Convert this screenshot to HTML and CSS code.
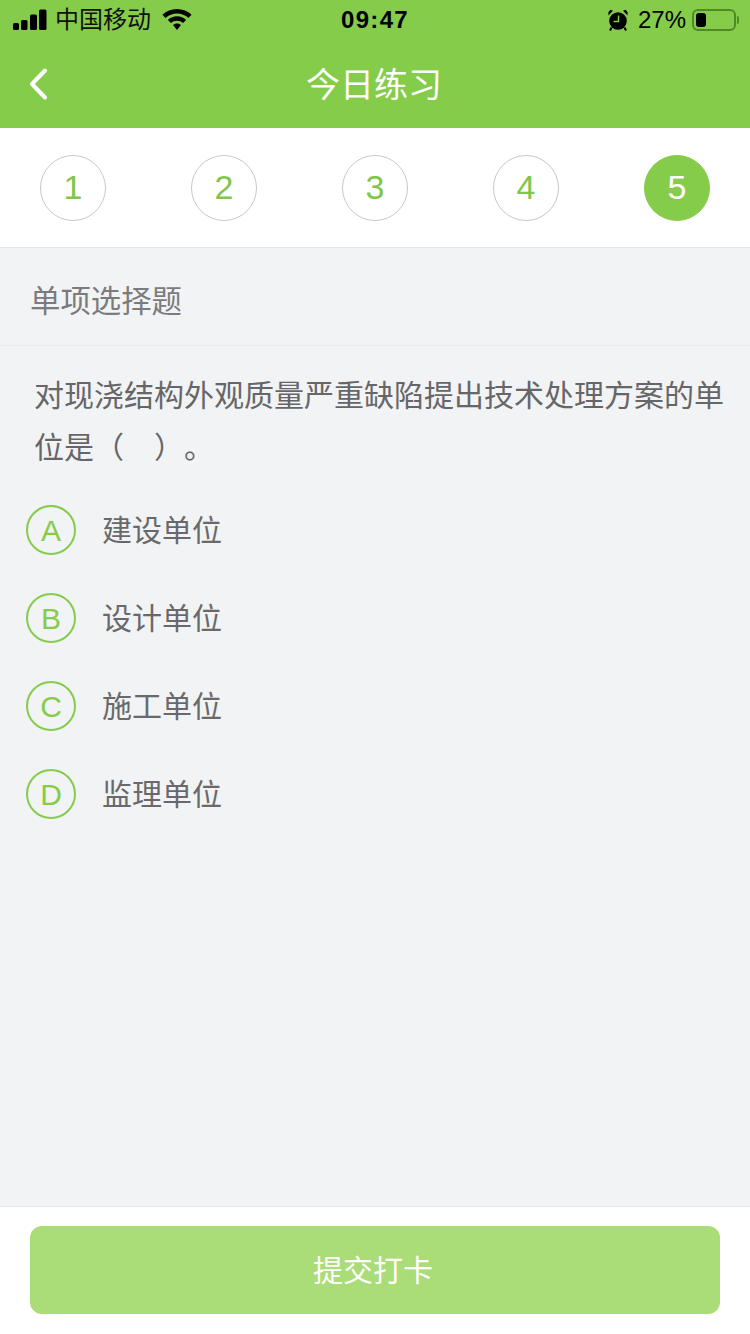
FILE: index.html
```html
<!DOCTYPE html>
<html lang="zh-CN">
<head>
<meta charset="utf-8">
<title>今日练习</title>
<link rel="stylesheet" href="styles.css">
</head>
<body>
<div class="page">
  <header class="top">
    <div class="status">
      <div class="status-left">
        <svg class="signal" width="34" height="22" viewBox="0 0 34 22"><rect x="0" y="14" width="6" height="7" rx="1.500"/><rect x="8" y="11" width="6.500" height="10" rx="1.500"/><rect x="17" y="5.500" width="7" height="15.500" rx="1.500"/><rect x="26" y="0.500" width="7.500" height="20.500" rx="1.500"/></svg>
        <span class="carrier">中国移动</span>
        <svg class="wifi" width="30" height="22" viewBox="0 0 30 22"><path d="M15 0C9.300 0 4.300 2.200 0.400 5.800L3.600 9C6.700 6.300 10.600 4.600 15 4.600S23.300 6.300 26.400 9L29.600 5.800C25.700 2.200 20.700 0 15 0Z"/><path d="M15 7.300C11.500 7.300 8.300 8.600 5.900 10.900L9 14C10.600 12.600 12.700 11.800 15 11.800S19.400 12.600 21 14L24.100 10.900C21.700 8.600 18.500 7.300 15 7.300Z"/><path d="M15 14.400C13.500 14.400 12.100 15 11 16L15 21L19 16C17.900 15 16.500 14.400 15 14.400Z"/></svg>
      </div>
      <span class="clock">09:47</span>
      <div class="status-right">
        <svg class="alarm" width="20" height="22" viewBox="0 0 20 22"><circle cx="10" cy="12" r="8.800"/><path d="M0.500 6.500 5 1.800 2.300 0.800.4 3.200ZM19.500 6.500 15 1.800 17.700 0.800 19.600 3.200Z"/><path d="M3.500 18.500 2 21.500M16.500 18.500 18 21.500" stroke="#000" stroke-width="2"/><path d="M10.500 6.500V12.500H5.500" fill="none" stroke="#86cc4b" stroke-width="1.500"/></svg>
        <span class="percent">27%</span>
        <span class="battery"><span class="battery-level"></span></span>
        <span class="battery-cap"></span>
      </div>
    </div>
    <nav class="navbar">
      <svg class="back" width="20" height="34" viewBox="0 0 20 34"><path d="M16 3.500 3 17 16 30.500" fill="none" stroke="#fff" stroke-width="4" stroke-linecap="round" stroke-linejoin="round"/></svg>
      <h1 class="title">今日练习</h1>
    </nav>
  </header>

  <div class="steps">
    <span class="step">1</span>
    <span class="step">2</span>
    <span class="step">3</span>
    <span class="step">4</span>
    <span class="step step-active">5</span>
  </div>

  <main class="content">
    <div class="type">单项选择题</div>
    <p class="question">对现浇结构外观质量严重缺陷提出技术处理方案的单位是（　）。</p>
    <ul class="options">
      <li class="option"><span class="letter">A</span><span class="option-text">建设单位</span></li>
      <li class="option"><span class="letter">B</span><span class="option-text">设计单位</span></li>
      <li class="option"><span class="letter">C</span><span class="option-text">施工单位</span></li>
      <li class="option"><span class="letter">D</span><span class="option-text">监理单位</span></li>
    </ul>
  </main>

  <footer class="footer">
    <button class="submit" type="button">提交打卡</button>
  </footer>
</div>
</body>
</html>
```
FILE: styles.css
```css
* { box-sizing: border-box; }
html, body { margin: 0; padding: 0; }
body {
  width: 750px;
  height: 1334px;
  overflow: hidden;
  background: #f2f3f5;
  font-family: "Liberation Sans", "Noto Sans CJK SC", sans-serif;
  text-spacing-trim: space-all;
}
.page { display: flex; flex-direction: column; height: 1334px; }

.top { height: 128px; background: #86cc4b; flex: none; }
.status {
  height: 40px;
  display: flex;
  align-items: center;
  justify-content: space-between;
  padding: 0 11px 0 13px;
  position: relative;
  color: #000;
}
.status-left, .status-right { display: flex; align-items: center; }
.signal { margin-right: 8px; }
.carrier { font-size: 24px; line-height: 40px; color: #111; }
.wifi { margin-left: 11px; }
.clock {
  position: absolute;
  left: 0;
  right: 0;
  text-align: center;
  font-size: 24px;
  font-weight: 700;
  line-height: 40px;
  letter-spacing: 1.3px;
  pointer-events: none;
}
.status-right { position: relative; }
.alarm { margin-right: 10px; }
.percent { font-size: 24px; line-height: 40px; margin-right: 6px; }
.battery {
  display: block;
  width: 44px;
  height: 22px;
  border: 2px solid #4f8a24;
  border-radius: 6px;
  padding: 2px;
}
.battery-level { display: block; width: 10px; height: 14px; background: #000; border-radius: 3px; }
.battery-cap { display: block; width: 2px; height: 8px; margin-left: 1px; background: #4f8a24; border-radius: 0 2px 2px 0; }

.navbar {
  height: 88px;
  position: relative;
  display: flex;
  align-items: center;
  justify-content: center;
}
.back { position: absolute; left: 29px; top: 27px; }
.title { margin: 0 2px 0 0; font-size: 34px; font-weight: 400; color: #fff; line-height: 88px; position: relative; top: 1px; }

.steps {
  height: 120px;
  flex: none;
  background: #fff;
  border-bottom: 1px solid #e6e7e9;
  display: flex;
  justify-content: space-between;
  align-items: center;
  padding: 0 40px;
}
.step {
  width: 66px;
  height: 66px;
  border: 1px solid #c8c8c8;
  border-radius: 50%;
  display: flex;
  align-items: center;
  justify-content: center;
  font-size: 34px;
  color: #80c64a;
}
.step-active { background: #86cc4b; border-color: #86cc4b; color: #fff; }

.content { flex: 1; min-height: 0; }
.type {
  height: 98px;
  border-bottom: 1px solid #e9eaec;
  padding-left: 30px;
  font-size: 30.400px;
  line-height: 107px;
  color: #7b7b7d;
}
.question {
  margin: 0;
  padding: 24px 20px 0 34px;
  font-size: 30px;
  line-height: 52px;
  color: #666668;
}
.options { list-style: none; margin: 0; padding: 10px 0 0 26px; }
.option { height: 88px; display: flex; align-items: center; }
.letter {
  width: 50px;
  height: 50px;
  flex: none;
  margin-top: 3px;
  border: 2px solid #86cc4b;
  border-radius: 50%;
  display: flex;
  align-items: center;
  justify-content: center;
  font-size: 30px;
  color: #86cc4b;
  padding-top: 2px;
}
.option-text { margin-left: 26px; margin-bottom: 1px; font-size: 30px; color: #69696b; }

.footer {
  height: 128px;
  flex: none;
  background: #fff;
  border-top: 1px solid #e6e7e9;
  padding: 19px 30px 0;
}
.submit {
  display: block;
  width: 690px;
  height: 88px;
  border: 0;
  border-radius: 12px;
  background: #aadc78;
  color: #fff;
  font-family: inherit;
  font-size: 30px;
  padding: 0 4px 4px 0;
}
```
